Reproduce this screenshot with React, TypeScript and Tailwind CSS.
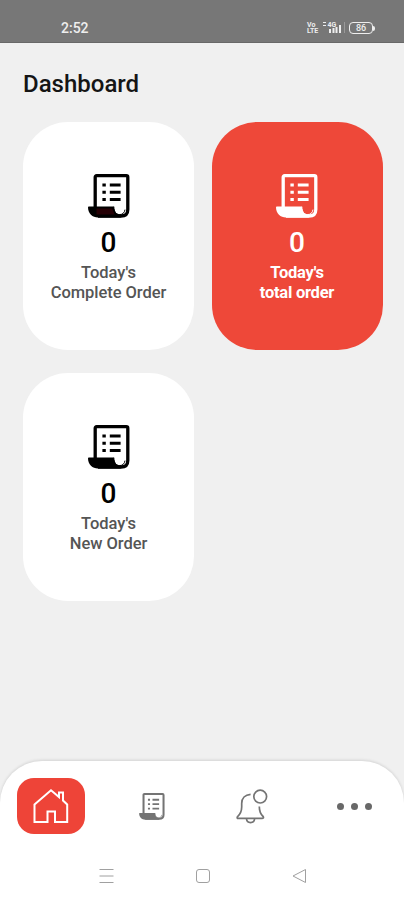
import React from "react";

function ReceiptIcon({ className, roll = "currentColor" }: { className: string; roll?: string }) {
  return (
    <svg viewBox="0 0 42 44" className={className} fill="none">
      <path d="M7.2 34V3.2Q7.2 1.7 8.7 1.7H38.3Q39.8 1.7 39.8 3.2V35.5Q39.8 42 33 42H10" stroke="currentColor" strokeWidth="3.3" />
      <path d="M0.8 32.6H25.8C26.2 38 28.4 40.4 31.6 40.4L33 43.6H10C4.5 43.6 0 39.5 0 33.6Q0 32.6 0.8 32.6Z" fill="currentColor" />
      <path d="M8.5 34.5H24.2L26.5 40.5H8.5Z" fill={roll} />
      <path d="M25.8 32.6C26 38 28.4 40.6 31.7 40.6C34.6 40.6 36.6 38.6 37 35.6" stroke="currentColor" strokeWidth="1" />
      <path d="M14.4 11H17.8M21.8 11H32.6M14.4 18.2H17.8M21.8 18.2H32.6M14.4 25.5H17.8M21.8 25.5H32.6" stroke="currentColor" strokeWidth="3" />
    </svg>
  );
}

function OrderCard({ label, detail, active = false, roll }: { label: string; detail: string; active?: boolean; roll?: string }) {
  return (
    <section
      className={
        "flex h-[228px] w-[171px] flex-col items-center rounded-[45px] pt-[52px] text-center " +
        (active ? "bg-[#ee4839] text-white" : "bg-white text-black")
      }
    >
      <ReceiptIcon className="h-[44px] w-[42px] shrink-0" roll={roll} />
      <div className="mt-[9px] text-[28px] leading-[32px] font-medium">0</div>
      <div
        className={
          "mt-[4px] text-[16.5px] leading-[20px] " +
          (active ? "font-bold tracking-[-0.25px]" : "font-medium tracking-[-0.05px] text-[#555]")
        }
      >
        <div>{label}</div>
        <div>{detail}</div>
      </div>
    </section>
  );
}

function StatusBar() {
  return (
    <header className="flex h-[43px] items-start justify-between border-b border-[#686868] bg-[#777] pt-[20px] pr-[29px] pl-[61px] text-[#eee]">
      <span className="text-[14px] leading-[16px] font-medium">2:52</span>
      <div className="flex items-center pt-[1px]">
        <div className="flex w-[10px] flex-col text-[7px] leading-[6px] font-bold">
          <span>Vo</span>
          <span>LTE</span>
        </div>
        <svg viewBox="0 0 24 14" className="ml-[5px] h-[14px] w-[24px]" fill="none">
          <path d="M1 1.5H4M1 4.5H4" stroke="currentColor" strokeWidth="1.2" />
          <text x="5.5" y="6" fill="currentColor" className="text-[7px] font-bold">4G</text>
          <path d="M8 12V8M11.5 12V7M14.5 12V6M18 12V4" stroke="currentColor" strokeWidth="2" />
          <path d="M22.5 12V1" stroke="#999" strokeWidth="1" />
        </svg>
        <div className="ml-[3px] flex items-center">
          <span className="flex h-[12px] w-[24px] items-center justify-center rounded-[4px] border border-[#eee] text-[9px] leading-none font-medium">86</span>
          <span className="h-[5px] w-[2px] rounded-r-full bg-[#eee]" />
        </div>
      </div>
    </header>
  );
}

function BottomNav() {
  return (
    <footer className="h-[139px] rounded-t-[42px] bg-white pt-[17px] shadow-[0_-1px_3px_rgba(0,0,0,0.12)]">
      <nav className="flex h-[56px] items-center pl-[17px] text-[#747474]">
        <div className="flex h-[56px] w-[68px] items-center justify-center rounded-[17px] bg-[#ee4438] text-white">
          <svg viewBox="0 0 36 36" className="h-[36px] w-[36px]" fill="none" stroke="currentColor" strokeWidth="2">
            <path d="M1.5 16.5L18 2.2L26 9V4.5H30V12.5L34.2 16.5V34H22V23.5H14.5V34H1.5Z" />
          </svg>
        </div>
        <ReceiptIcon className="ml-[54px] h-[27px] w-[26px]" />
        <svg viewBox="0 0 32 35" className="ml-[71px] h-[35px] w-[32px]" fill="none" stroke="currentColor" strokeWidth="1.7">
          <path d="M14.6 5.4C9 5.8 5.7 9.4 5.7 14.5V18C5.7 23.2 4 25.4 1.4 27.8Q.7 29.4 2.3 29.4H26Q28.2 29.4 27.1 27.5C24.7 25.3 23.3 22.5 23.3 17.5" />
          <path d="M10.5 29.8C10.8 34.8 18.3 34.8 18.6 29.8" />
          <circle cx="24.2" cy="7.6" r="6.4" />
        </svg>
        <div className="ml-[69px] flex gap-[7px]">
          <span className="size-[7px] rounded-full bg-[#686868]" />
          <span className="size-[7px] rounded-full bg-[#686868]" />
          <span className="size-[7px] rounded-full bg-[#686868]" />
        </div>
      </nav>
      <div className="mt-[34px] flex items-center pl-[99px] text-[#a0a0a0]">
        <svg viewBox="0 0 15 16" className="h-[16px] w-[15px]" fill="none" stroke="currentColor" strokeWidth="1">
          <path d="M.5 1.5H14.5M.5 8H14.5M.5 14.5H14.5" />
        </svg>
        <span className="ml-[82px] h-[14px] w-[14px] rounded-[3px] border border-[#a0a0a0]" />
        <svg viewBox="0 0 15 16" className="ml-[82px] h-[16px] w-[15px]" fill="none" stroke="currentColor" strokeWidth="1">
          <path d="M13.5 1.5V14.5L1 8Z" strokeLinejoin="round" />
        </svg>
      </div>
    </footer>
  );
}

export default function App() {
  return (
    <div className="flex h-[900px] w-[404px] flex-col overflow-hidden bg-[#f0f0f0] font-[Roboto,sans-serif]">
      <StatusBar />
      <main className="flex-1 pt-[25px] pl-[23px]">
        <h1 className="text-[24px] leading-[32px] font-medium tracking-[0px] text-[#151515]">Dashboard</h1>
        <div className="mt-[22px] grid w-fit grid-cols-2 gap-x-[17.5px] gap-y-[23px]">
          <OrderCard label="Today's" detail="Complete Order" roll="#250005" />
          <OrderCard label="Today's" detail="total order" active />
          <OrderCard label="Today's" detail="New Order" />
        </div>
      </main>
      <BottomNav />
    </div>
  );
}
